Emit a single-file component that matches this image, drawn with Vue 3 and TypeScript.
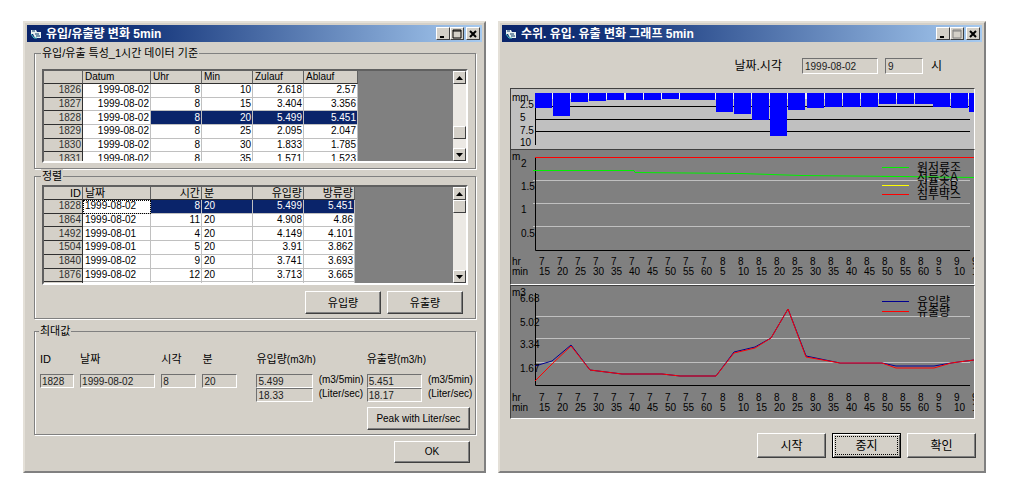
<script setup lang="ts">
interface Tick { hour: string; minute: string; x: number }

const hourly: string[][] = [
  ['1826', '1999-08-02', '8', '10', '2.618', '2.57'],
  ['1827', '1999-08-02', '8', '15', '3.404', '3.356'],
  ['1828', '1999-08-02', '8', '20', '5.499', '5.451'],
  ['1829', '1999-08-02', '8', '25', '2.095', '2.047'],
  ['1830', '1999-08-02', '8', '30', '1.833', '1.785'],
  ['1831', '1999-08-02', '8', '35', '1.571', '1.523'],
]

const sorted: string[][] = [
  ['1828', '1999-08-02', '8', '20', '5.499', '5.451'],
  ['1864', '1999-08-02', '11', '20', '4.908', '4.86'],
  ['1492', '1999-08-01', '4', '20', '4.149', '4.101'],
  ['1504', '1999-08-01', '5', '20', '3.91', '3.862'],
  ['1840', '1999-08-02', '9', '20', '3.741', '3.693'],
  ['1876', '1999-08-02', '12', '20', '3.713', '3.665'],
  ['', '', '', '', '', ''],
]

const pitch = 18.1
const axisX = 24

const rain = [15, 23, 9, 8, 7, 7, 7, 6, 7, 7, 19, 21, 27, 43, 17, 15, 14, 14, 14, 11, 11, 11, 14, 15, 19]
const bars = rain.map((depth, i) => ({ x: Math.round(axisX + i * pitch), depth }))
const rainGrid = [17, 30, 42]
const rainLabels = [
  { text: '2.5', y: 19 },
  { text: '5', y: 32 },
  { text: '7.5', y: 45 },
  { text: '10', y: 57 },
]

const ticks: Tick[] = Array.from({ length: 25 }, (_, i) => {
  const total = i + 3
  const hour = 7 + Math.floor((total - 1) / 12)
  const minute = (((total - 1) % 12) + 1) * 5
  return { hour: String(hour), minute: String(minute), x: 28 + Math.round(i * 18.05) }
})

const levelGrid = [30, 53, 76]
const levelLabels = [
  { text: '2', y: 17 },
  { text: '1.5', y: 40 },
  { text: '1', y: 63 },
  { text: '0.5', y: 87 },
]
const levelLegend = [
  { text: '원저류조', color: '#00f000', y: 17 },
  { text: '저류조A', color: '#00f000', y: 26 },
  { text: '저류조B', color: '#ffff00', y: 35 },
  { text: '침투박스', color: '#ff0000', y: 44 },
]

const flowGrid = [30, 52, 76]
const flowLabels = [
  { text: '6.68', y: 16 },
  { text: '5.02', y: 40 },
  { text: '3.34', y: 62 },
  { text: '1.67', y: 86 },
]
const flowLegend = [
  { text: '유입량', color: '#000090', y: 15 },
  { text: '유출량', color: '#ff0000', y: 25 },
]
const inflow = '24,80 41,75 60,59 79,84 111,88 151,88 169,90 205,90 223,66 244,61 260,52 277,23 295,70 329,77 371,77 385,80 423,80 440,77 463,74'
const outflow = '24,95 41,78 60,60 79,84 111,88 151,88 169,90 205,90 223,67 244,62 260,52 277,23 295,71 329,77 371,77 385,82 423,82 440,77 463,74'
</script>

<template>
  <main class="desktop">
    <section class="window">
      <header class="titlebar">
        <svg class="app-icon" viewBox="0 0 12 12" aria-hidden="true">
          <path d="M1 2h5l1 2h4v6H5L3 6H1z" fill="#e8f0f0" />
          <path d="M2 3h3M5 6h4M6 8h4" stroke="#0a3a6a" />
          <path d="M1 6l3 4h3" stroke="#50c8c8" fill="none" />
        </svg>
        <h1>유입/유출량 변화 5min</h1>
        <div class="controls">
          <button type="button" aria-label="Minimize"><svg viewBox="0 0 10 10"><path d="M2 8h4" stroke="#000" stroke-width="2" /></svg></button>
          <button type="button" aria-label="Maximize"><svg viewBox="0 0 10 10"><path d="M1 1h8v8H1zM1 2h8" fill="none" stroke="#000" /></svg></button>
          <button type="button" class="close" aria-label="Close"><svg viewBox="0 0 10 10"><path d="M2 2l6 6M8 2l-6 6" stroke="#000" stroke-width="2" /></svg></button>
        </div>
      </header>

      <div class="body">
        <fieldset class="group source">
          <legend>유입/유출 특성_1시간 데이터 기준</legend>
          <div class="grid">
            <table>
              <colgroup><col class="c-id"><col class="c-date"><col class="c-num"><col class="c-num"><col class="c-num"><col class="c-last"></colgroup>
              <thead>
                <tr><th></th><th>Datum</th><th>Uhr</th><th>Min</th><th>Zulauf</th><th>Ablauf</th></tr>
              </thead>
              <tbody>
                <tr v-for="row in hourly" :key="row[0]" :class="{ selected: row[0] === '1828' }">
                  <th scope="row">{{ row[0] }}</th>
                  <td v-for="(cell, i) in row.slice(1)" :key="i">{{ cell }}</td>
                </tr>
              </tbody>
            </table>
            <div class="scroll">
              <button type="button" aria-label="Scroll up"><svg viewBox="0 0 7 4"><path d="M0 4h7L3.500 0z" /></svg></button>
              <div class="track low"><span class="thumb"></span></div>
              <button type="button" aria-label="Scroll down"><svg viewBox="0 0 7 4"><path d="M0 0h7L3.500 4z" /></svg></button>
            </div>
          </div>
        </fieldset>

        <fieldset class="group order">
          <legend>정렬</legend>
          <div class="grid">
            <table>
              <colgroup><col class="c-id"><col class="c-date"><col class="c-num"><col class="c-num"><col class="c-num"><col class="c-num"></colgroup>
              <thead>
                <tr><th class="right">ID</th><th>날짜</th><th class="right">시간</th><th>분</th><th class="right">유입량</th><th class="right">방류량</th></tr>
              </thead>
              <tbody>
                <tr v-for="(row, r) in sorted" :key="r" :class="{ selected: r === 0 }">
                  <th scope="row">{{ row[0] }}</th>
                  <td v-for="(cell, i) in row.slice(1)" :key="i" :class="{ left: i === 0 || i === 2 }">{{ cell }}</td>
                </tr>
              </tbody>
            </table>
            <div class="scroll">
              <button type="button" aria-label="Scroll up"><svg viewBox="0 0 7 4"><path d="M0 4h7L3.500 0z" /></svg></button>
              <div class="track"><span class="thumb"></span></div>
              <button type="button" aria-label="Scroll down"><svg viewBox="0 0 7 4"><path d="M0 0h7L3.500 4z" /></svg></button>
            </div>
          </div>
          <div class="actions">
            <button type="button" class="btn">유입량</button>
            <button type="button" class="btn">유출량</button>
          </div>
        </fieldset>

        <fieldset class="group peak">
          <legend>최대값</legend>
          <div class="fields">
            <label for="f-id" class="col1">ID</label>
            <label for="f-date" class="col2">날짜</label>
            <label for="f-hour" class="col3">시각</label>
            <label for="f-min" class="col4">분</label>
            <label for="f-in" class="col6 wide">유입량<small>(m3/h)</small></label>
            <label for="f-out" class="col8 wide">유출량<small>(m3/h)</small></label>

            <input id="f-id" class="col1 row2" value="1828" readonly>
            <input id="f-date" class="col2 row2" value="1999-08-02" readonly>
            <input id="f-hour" class="col3 row2" value="8" readonly>
            <input id="f-min" class="col4 row2" value="20" readonly>
            <input id="f-in" class="col6 row2" value="5.499" readonly>
            <span class="unit col7 row2">(m3/5min)</span>
            <input id="f-out" class="col8 row2" value="5.451" readonly>
            <span class="unit col9 row2">(m3/5min)</span>
            <input id="f-in-l" class="col6 row3" value="18.33" readonly>
            <label for="f-in-l" class="unit col7 row3">(Liter/sec)</label>
            <input id="f-out-l" class="col8 row3" value="18.17" readonly>
            <label for="f-out-l" class="unit col9 row3">(Liter/sec)</label>
            <button type="button" class="btn latin col8 row4 wide">Peak with Liter/sec</button>
          </div>
        </fieldset>

        <div class="footer">
          <button type="button" class="btn latin ok">OK</button>
        </div>
      </div>
    </section>

    <section class="window">
      <header class="titlebar">
        <svg class="app-icon" viewBox="0 0 12 12" aria-hidden="true">
          <path d="M1 2h5l1 2h4v6H5L3 6H1z" fill="#e8f0f0" />
          <path d="M2 3h3M5 6h4M6 8h4" stroke="#0a3a6a" />
          <path d="M1 6l3 4h3" stroke="#50c8c8" fill="none" />
        </svg>
        <h1>수위. 유입. 유출 변화 그래프 5min</h1>
        <div class="controls">
          <button type="button" aria-label="Minimize"><svg viewBox="0 0 10 10"><path d="M2 8h4" stroke="#000" stroke-width="2" /></svg></button>
          <button type="button" aria-label="Maximize" disabled><svg viewBox="0 0 10 10"><path d="M1 1h8v8H1zM1 2h8" fill="none" stroke="#808080" /></svg></button>
          <button type="button" class="close" aria-label="Close"><svg viewBox="0 0 10 10"><path d="M2 2l6 6M8 2l-6 6" stroke="#000" stroke-width="2" /></svg></button>
        </div>
      </header>

      <div class="body graphs">
        <div class="when">
          <label for="g-date">날짜.시각</label>
          <input id="g-date" class="date" value="1999-08-02" readonly>
          <input id="g-hour" class="hour" value="9" readonly>
          <label for="g-hour" class="suffix">시</label>
        </div>

        <div class="panel rain">
          <svg viewBox="0 0 463 60" role="img" aria-label="mm">
            <text x="1" y="12">mm</text>
            <path v-for="y in rainGrid" :key="y" :d="`M24 ${y}.500H459`" class="black" />
            <path d="M24.500 4V56" class="black" />
            <g class="crisp">
              <rect x="24" y="4" width="439" height="6" fill="#f4f4f4" />
              <rect v-for="(b, i) in bars" :key="i" :x="b.x" y="4" :width="i === 8 || i === 21 ? 19 : 17" :height="b.depth" fill="#00f" />
            </g>
            <text v-for="l in rainLabels" :key="l.text" x="9" :y="l.y">{{ l.text }}</text>
          </svg>
        </div>

        <div class="panel">
          <svg viewBox="0 0 463 134" role="img" aria-label="m">
            <path v-for="y in levelGrid" :key="y" :d="`M22 ${y}.500H459`" class="rule" />
            <path d="M24.500 7V100.500H459" class="black" />
            <rect x="24" y="7" width="439" height="1" fill="#ff0000" />
            <path d="M22 20.500H123L124 22.500L230 23.500L290 25.500L390 26.500L463 27.500" class="line" stroke="#00f000" />
            <text x="1" y="10">m</text>
            <text v-for="l in levelLabels" :key="l.text" x="10" :y="l.y">{{ l.text }}</text>
            <g v-for="l in levelLegend" :key="l.text">
              <rect x="371" :y="l.y" width="27" height="1" :fill="l.color" />
              <text class="legend" x="406" :y="l.y + 5">{{ l.text }}</text>
            </g>
            <text x="1" y="115">hr</text>
            <text x="1" y="125">min</text>
            <g v-for="t in ticks" :key="t.x">
              <text :x="t.x" y="115">{{ t.hour }}</text>
              <text :x="t.x" y="125">{{ t.minute }}</text>
            </g>
          </svg>
        </div>

        <div class="panel">
          <svg viewBox="0 0 463 132" role="img" aria-label="m3">
            <path v-for="y in flowGrid" :key="y" :d="`M24 ${y}.500H459`" class="rule" />
            <path d="M24.500 7V99.500H459" class="black" />
            <polyline :points="inflow" class="line" stroke="#000090" />
            <polyline :points="outflow" class="line" stroke="#ff0000" />
            <text x="1" y="10">m3</text>
            <text v-for="l in flowLabels" :key="l.text" x="9" :y="l.y">{{ l.text }}</text>
            <g v-for="l in flowLegend" :key="l.text">
              <rect x="371" :y="l.y" width="27" height="1" :fill="l.color" />
              <text class="legend" x="406" :y="l.y + 5">{{ l.text }}</text>
            </g>
            <text x="1" y="115">hr</text>
            <text x="1" y="125">min</text>
            <g v-for="t in ticks" :key="t.x">
              <text :x="t.x" y="115">{{ t.hour }}</text>
              <text :x="t.x" y="125">{{ t.minute }}</text>
            </g>
          </svg>
        </div>

        <div class="actions run">
          <button type="button" class="btn">시작</button>
          <button type="button" class="btn focused">중지</button>
          <button type="button" class="btn">확인</button>
        </div>
      </div>
    </section>
  </main>
</template>

<style>
body {
  background: #fff;
}
</style>

<style scoped>
.desktop {
  display: grid;
  grid-template-columns: minmax(0, 463fr) minmax(0, 488fr);
  gap: 12px;
  padding: 21px 30px 19px 23px;
  color: #000;
  font: 12px/14px "Liberation Sans", "Noto Sans CJK KR", sans-serif;
}

.desktop *,
.desktop *::before {
  box-sizing: border-box;
}

.window {
  padding: 2px;
  border: 2px solid;
  border-color: #e4e0d8 #808080 #808080 #e4e0d8;
  background: #d4d0c8;
}

.titlebar {
  display: flex;
  align-items: center;
  height: 17px;
  padding: 0 2px 0 3px;
  background: linear-gradient(90deg, #0a246a, #16377c 25%, #a6caf0);
  color: #fff;
}

.app-icon {
  width: 12px;
  height: 12px;
  margin-right: 4px;
}

h1 {
  flex: 1;
  margin: 0;
  font-size: 12px;
  line-height: 16px;
  font-weight: 700;
  white-space: nowrap;
}

.controls {
  display: flex;
}

.controls button {
  display: flex;
  align-items: center;
  justify-content: center;
  width: 14px;
  height: 13px;
  padding: 0;
  border: 1px solid;
  border-color: #fff #404040 #404040 #fff;
  background: #d4d0c8;
}

.controls .close {
  margin-left: 2px;
}

.controls svg {
  width: 10px;
  height: 10px;
}

.body {
  padding: 4px 6px 5px 7px;
}

.group {
  min-width: 0;
  margin: 0;
  padding: 0 7px;
  border: 1px solid #808080;
  box-shadow: 1px 1px #fff, inset 1px 0 #fff;
}

legend {
  margin-left: -1px;
  padding: 0 1px;
  background: #d4d0c8;
  font-size: 11px;
  line-height: 14px;
}

.source {
  padding: 9px 7px 5px;
}

.order {
  padding: 2px 7px 4px;
}

.peak {
  margin-top: 5px;
  padding: 14px 5px 4px;
}

.grid {
  display: flex;
  justify-content: space-between;
  height: 94px;
  overflow: hidden;
  border: 2px solid;
  border-color: #606060 #fff #fff #606060;
  background: #808080;
}

.order .grid {
  height: 100px;
}

table {
  flex: none;
  table-layout: fixed;
  width: 314px;
  height: 95px;
  border-collapse: separate;
  border-spacing: 0;
  background: #fff;
  font: 10px/12px "Liberation Sans", "Noto Sans CJK KR", sans-serif;
}

.order table {
  width: 310px;
  height: 109px;
}

.c-id { width: 39px; }
.c-date { width: 68px; }
.c-num { width: 51px; }
.c-last { width: 54px; }

th,
td {
  overflow: hidden;
  height: 13px;
  padding: 0 1px 0 2px;
  border-right: 1px solid #c0c0c0;
  border-bottom: 1px solid #c0c0c0;
  text-align: right;
  font-weight: 400;
  white-space: nowrap;
}

th {
  border-color: #303030;
  background: #d4d0c8;
}

thead th {
  border-right-color: #606060;
  text-align: left;
}

.order thead th {
  font-size: 11px;
}

thead th.right {
  text-align: right;
}

td.left {
  text-align: left;
}

tbody th {
  color: #303030;
}

.selected td {
  background: #0a246a;
  color: #fff;
}

.selected td:nth-child(2) {
  background: #fff;
  color: #000;
}

.order .selected td:nth-child(2) {
  outline: 1px dotted #000;
  outline-offset: -1px;
}

.scroll {
  display: flex;
  flex-direction: column;
  width: 13px;
  background: #ece9e4;
}

.scroll button,
.thumb {
  display: flex;
  align-items: center;
  justify-content: center;
  width: 13px;
  height: 13px;
  padding: 0;
  border: 1px solid;
  border-color: #fff #404040 #404040 #fff;
  background: #d4d0c8;
}

.scroll svg {
  width: 7px;
  height: 4px;
}

.track {
  display: flex;
  flex: 1;
  flex-direction: column;
}

.track.low {
  justify-content: flex-end;
  padding-bottom: 9px;
}

.actions {
  display: flex;
  justify-content: flex-end;
  gap: 6px;
  margin-top: 6px;
  padding-right: 5px;
}

.btn {
  width: 76px;
  height: 23px;
  padding: 0;
  border: 1px solid;
  border-color: #fff #404040 #404040 #fff;
  box-shadow: inset -1px -1px #808080;
  background: #d4d0c8;
  color: #000;
  font: inherit;
}

.order .btn {
  font-size: 11px;
}

.latin {
  font-size: 10px;
}

.fields {
  display: grid;
  grid-template-columns: 34fr 75fr 35fr 35fr 7fr 56fr 42fr 55fr 42fr;
  grid-template-rows: 14px 8px 14px 14px 5px 23px;
  column-gap: 6px;
  font-size: 11px;
}

.fields > * {
  min-width: 0;
  white-space: nowrap;
}

.col1 { grid-column: 1; }
.col2 { grid-column: 2; }
.col3 { grid-column: 3; }
.col4 { grid-column: 4; }
.col6 { grid-column: 6; }
.col7 { grid-column: 7; }
.col8 { grid-column: 8; }
.col9 { grid-column: 9; }
.col6.wide { grid-column: 6 / 8; }
.col8.wide { grid-column: 8 / 10; }
.row2 { grid-row: 3; }
.row3 { grid-row: 4; }
.row4 { grid-row: 6; }

.btn.wide {
  width: auto;
}

small,
.unit {
  font-size: 10px;
}

.unit {
  line-height: 12px;
}

input {
  width: 100%;
  height: 14px;
  padding: 0 1px;
  border: 1px solid;
  border-color: #707070 #fff #fff #707070;
  border-radius: 0;
  background: #d4d0c8;
  color: #202020;
  font: 10px/12px "Liberation Sans", sans-serif;
}

.footer {
  display: flex;
  justify-content: flex-end;
  padding: 6px 6px 0 0;
}

.ok {
  height: 22px;
}

.graphs {
  padding: 16px 6px 11px 8px;
}

.when {
  display: flex;
  align-items: center;
  justify-content: flex-end;
  height: 16px;
  margin-bottom: 14px;
  padding-right: 34px;
}

.when input {
  height: 16px;
  padding: 0 2px;
}

.when .date {
  width: 76px;
  margin: 0 7px 0 20px;
}

.when .hour {
  width: 38px;
  margin-right: 8px;
}

.panel {
  margin-right: 1px;
  border: 1px solid;
  border-color: #404040 #fff #fff #404040;
  background: #808080;
}

.panel.rain {
  border-bottom: 0;
  background: #c0c0c0;
}

.panel svg {
  display: block;
  width: 100%;
  height: auto;
  overflow: hidden;
}

.panel text {
  font: 10px "Liberation Sans", sans-serif;
}

.panel text.legend {
  font: 12px "Liberation Sans", "Noto Sans CJK KR", sans-serif;
}

.black {
  fill: none;
  stroke: #000;
}

.rule {
  stroke: #c0c0c0;
}

.line {
  fill: none;
}

.crisp {
  shape-rendering: crispEdges;
}

.run {
  margin-top: 14px;
  padding: 0;
}

.run .btn {
  width: 69px;
  height: 25px;
}

.focused {
  border: 1px solid #000;
  box-shadow: inset 1px 1px #fff, inset -1px -1px #606060;
  outline: 1px dotted #000;
  outline-offset: -4px;
}
</style>
